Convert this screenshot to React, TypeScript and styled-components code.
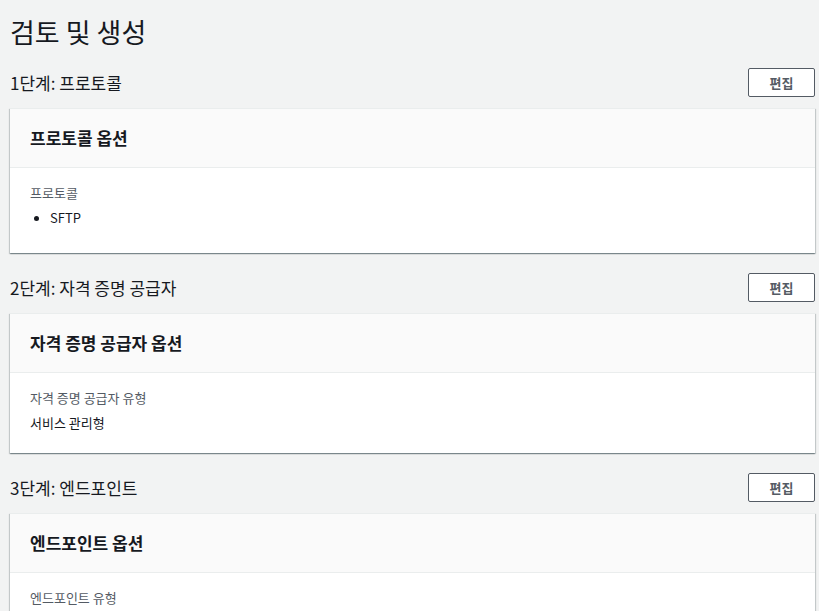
import React from 'react';
import styled, { createGlobalStyle } from 'styled-components';

const GlobalStyle = createGlobalStyle`
  body {
    margin: 0;
    background: #f2f3f3;
    font-family: 'Noto Sans CJK KR', 'Noto Sans', sans-serif;
    color: #16191f;
  }
`;

const Page = styled.div`
  padding: 12px 4px 0 10px;
`;

const Title = styled.h1`
  margin: 0 0 16px;
  font-size: 27px;
  font-weight: 400;
  line-height: 40px;
`;

const Section = styled.section`
  margin-bottom: 20px;
`;

const SectionHeader = styled.div`
  display: flex;
  align-items: center;
  justify-content: space-between;
  margin-bottom: 11px;
`;

const SectionTitle = styled.h2`
  margin: 0;
  font-size: 17px;
  font-weight: 400;
  line-height: 29px;
`;

const EditButton = styled.button`
  width: 67px;
  height: 29px;
  padding: 0;
  background: #fff;
  border: 1px solid #545b64;
  border-radius: 2px;
  font-family: inherit;
  font-size: 13px;
  font-weight: 700;
  color: #545b64;
  cursor: pointer;
`;

const Card = styled.div`
  background: #fff;
  border-top: 1px solid #eaeded;
  box-shadow: 0 1px 1px 0 rgba(0, 28, 36, 0.3),
    1px 1px 1px 0 rgba(0, 28, 36, 0.15),
    -1px 1px 1px 0 rgba(0, 28, 36, 0.15);
`;

const CardHeader = styled.div`
  background: #fafafa;
  border-bottom: 1px solid #eaeded;
  padding: 18px 20px;
  font-size: 17px;
  font-weight: 700;
  line-height: 22px;
`;

const CardBody = styled.div`
  padding: 14px 20px 19px;
`;

const Label = styled.div`
  font-size: 13px;
  line-height: 22px;
  color: #545b64;
`;

const Value = styled.div`
  margin-top: 3px;
  font-size: 13px;
  line-height: 22px;
`;

const List = styled.ul`
  margin: 3px 0 5px;
  padding-left: 20px;
  font-size: 13px;
  line-height: 22px;
  li::marker {
    font-size: 12px;
  }
`;

interface Step {
  title: string;
  card: string;
  label: string;
  value: string;
  bullet?: boolean;
}

const steps: Step[] = [
  { title: '1단계: 프로토콜', card: '프로토콜 옵션', label: '프로토콜', value: 'SFTP', bullet: true },
  { title: '2단계: 자격 증명 공급자', card: '자격 증명 공급자 옵션', label: '자격 증명 공급자 유형', value: '서비스 관리형' },
  { title: '3단계: 엔드포인트', card: '엔드포인트 옵션', label: '엔드포인트 유형', value: '퍼블릭' },
];

const App = () => {
  return (
    <Page>
      <GlobalStyle />
      <Title>검토 및 생성</Title>
      {steps.map(step => (
        <Section key={step.title}>
          <SectionHeader>
            <SectionTitle>{step.title}</SectionTitle>
            <EditButton>편집</EditButton>
          </SectionHeader>
          <Card>
            <CardHeader>{step.card}</CardHeader>
            <CardBody>
              <Label>{step.label}</Label>
              {step.bullet ? (
                <List>
                  <li>{step.value}</li>
                </List>
              ) : (
                <Value>{step.value}</Value>
              )}
            </CardBody>
          </Card>
        </Section>
      ))}
    </Page>
  );
};

export default App;
